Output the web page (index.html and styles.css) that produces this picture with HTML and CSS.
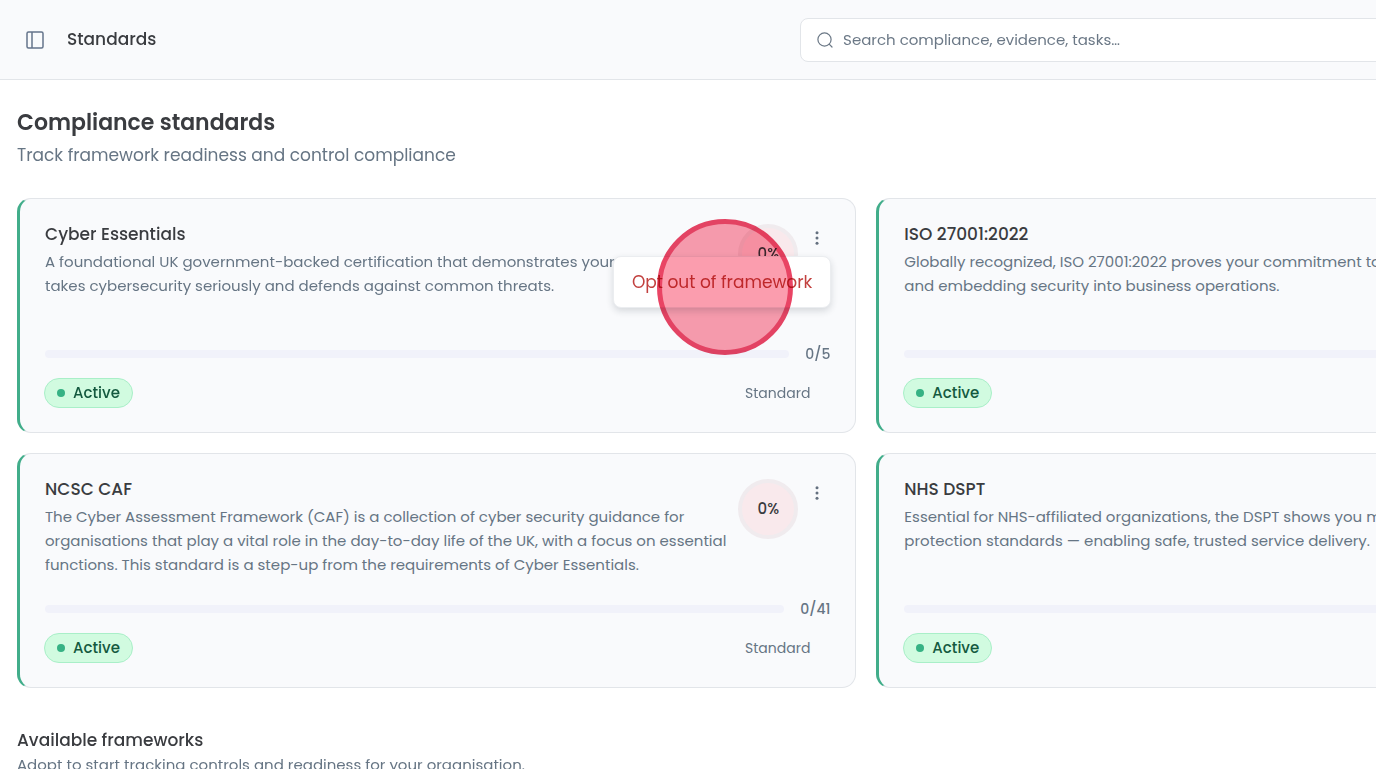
FILE: index.html
```
<!DOCTYPE html>
<html lang="en-GB">
<head>
<meta charset="utf-8">
<meta name="viewport" content="width=device-width, initial-scale=1">
<title>Standards</title>
<link rel="stylesheet" href="styles.css">
</head>
<body>
<header class="topbar">
  <div class="topbar-title">
    <button class="icon-button" type="button" aria-label="Toggle sidebar">
      <svg width="20" height="20" viewBox="0 0 20 20" fill="none" stroke="currentColor" stroke-width="1.5"><rect x="2" y="2" width="16" height="16" rx="1.5"/><path d="M7 2v16"/></svg>
    </button>
    <span class="page-name">Standards</span>
  </div>
  <label class="search">
    <svg width="18" height="18" viewBox="0 0 18 18" fill="none" stroke="currentColor" stroke-width="1.2" stroke-linecap="round"><circle cx="8.5" cy="8.5" r="6.6"/><path d="M13.2 13.2l2.8 2.8"/></svg>
    <input class="search-input" type="search" placeholder="Search compliance, evidence, tasks…" aria-label="Search">
  </label>
</header>
<main class="content">
  <h1 class="heading">Compliance standards</h1>
  <p class="subheading">Track framework readiness and control compliance</p>
  <section class="cards">
    <article class="card">
      <div class="card-head">
        <div class="card-text">
          <h2 class="card-title">Cyber Essentials</h2>
          <p class="card-desc">A foundational UK government-backed certification that demonstrates your organisation takes cybersecurity seriously and defends against common threats.</p>
        </div>
        <div class="ring">0%</div>
        <button class="kebab" type="button" aria-label="More options"><svg width="6" height="16" viewBox="0 0 6 16" fill="currentColor"><circle cx="3" cy="2.7" r="1.5"/><circle cx="3" cy="8" r="1.5"/><circle cx="3" cy="13.3" r="1.5"/></svg></button>
      </div>
      <div class="progress"><div class="track"></div><span>0/5</span></div>
      <div class="card-foot"><span class="badge"><i class="dot"></i>Active</span><span class="kind">Standard</span></div>
      <div class="menu" role="menu"><button class="menu-item" type="button" role="menuitem">Opt out of framework</button></div>
      <div class="click-marker"></div>
    </article>
    <article class="card">
      <div class="card-head">
        <div class="card-text">
          <h2 class="card-title">ISO 27001:2022</h2>
          <p class="card-desc">Globally recognized, ISO 27001:2022 proves your commitment to<br>and embedding security into business operations.</p>
        </div>
        <div class="ring">0%</div>
        <button class="kebab" type="button" aria-label="More options"><svg width="6" height="16" viewBox="0 0 6 16" fill="currentColor"><circle cx="3" cy="2.7" r="1.5"/><circle cx="3" cy="8" r="1.5"/><circle cx="3" cy="13.3" r="1.5"/></svg></button>
      </div>
      <div class="progress"><div class="track"></div></div>
      <div class="card-foot"><span class="badge"><i class="dot"></i>Active</span></div>
    </article>
    <article class="card">
      <div class="card-head">
        <div class="card-text">
          <h2 class="card-title">NCSC CAF</h2>
          <p class="card-desc">The Cyber Assessment Framework (CAF) is a collection of cyber security guidance for organisations that play a vital role in the day-to-day life of the UK, with a focus on essential functions. This standard is a step-up from the requirements of Cyber Essentials.</p>
        </div>
        <div class="ring">0%</div>
        <button class="kebab" type="button" aria-label="More options"><svg width="6" height="16" viewBox="0 0 6 16" fill="currentColor"><circle cx="3" cy="2.7" r="1.5"/><circle cx="3" cy="8" r="1.5"/><circle cx="3" cy="13.3" r="1.5"/></svg></button>
      </div>
      <div class="progress"><div class="track"></div><span>0/41</span></div>
      <div class="card-foot"><span class="badge"><i class="dot"></i>Active</span><span class="kind">Standard</span></div>
    </article>
    <article class="card">
      <div class="card-head">
        <div class="card-text">
          <h2 class="card-title">NHS DSPT</h2>
          <p class="card-desc">Essential for NHS-affiliated organizations, the DSPT shows you meet<br>protection standards — enabling safe, trusted service delivery.</p>
        </div>
        <div class="ring">0%</div>
        <button class="kebab" type="button" aria-label="More options"><svg width="6" height="16" viewBox="0 0 6 16" fill="currentColor"><circle cx="3" cy="2.7" r="1.5"/><circle cx="3" cy="8" r="1.5"/><circle cx="3" cy="13.3" r="1.5"/></svg></button>
      </div>
      <div class="progress"><div class="track"></div></div>
      <div class="card-foot"><span class="badge"><i class="dot"></i>Active</span></div>
    </article>
  </section>
  <h2 class="section-title">Available frameworks</h2>
  <p class="section-desc">Adopt to start tracking controls and readiness for your organisation.</p>
</main>
</body>
</html>
```
FILE: styles.css
```
* { box-sizing: border-box; }
html { overflow: hidden; }
body {
  margin: 0;
  overflow: hidden;
  background: #fff;
  color: #3a3c40;
  font-family: Poppins, Inter, "Open Sans", sans-serif;
  font-size: 15px;
  line-height: 24px;
}
h1, h2, p { margin: 0; }
button { font: inherit; border: 0; background: none; padding: 0; cursor: pointer; }

.topbar {
  display: grid;
  grid-template-columns: 58vw 50vw;
  align-items: center;
  padding: 18px 0 17px 2px;
  background: #f9fafc;
  border-bottom: 1px solid #e2e5e9;
}
.topbar-title { display: flex; align-items: center; gap: 22px; padding-left: 23px; }
.icon-button { display: flex; color: #64748b; }
.page-name { padding-bottom: 2px; font-size: 17px; font-weight: 500; }
.search {
  display: flex;
  align-items: center;
  gap: 9px;
  height: 44px;
  padding: 0 15px;
  border: 1px solid #e2e5e9;
  border-radius: 8px;
  background: #fff;
  color: #6b7886;
}
.search-input { flex: 1; border: 0; outline: 0; padding: 0; background: none; font: inherit; color: inherit; }
.search-input::placeholder { color: #6b7886; opacity: 1; }

.content { padding: 26px 0 0 17px; }
.heading { font-size: 22px; line-height: 34px; font-weight: 600; }
.subheading { margin-top: 2px; font-size: 17px; line-height: 26px; color: #667584; }

.cards {
  display: grid;
  grid-template-columns: repeat(2, 61vw);
  gap: 20px;
  margin-top: 30px;
}
.card {
  position: relative;
  padding: 23px 25px 24px 25px;
  border: 1px solid #e2e5e9;
  border-left: 3px solid #41ad8a;
  border-radius: 14px;
  background: #f9fafc;
}
.card-head { display: flex; align-items: flex-start; }
.card-text { flex: 1; padding-right: 8px; }
.card-title { font-size: 17px; line-height: 24px; font-weight: 500; }
.card-desc { margin-top: 4px; min-height: 72px; color: #667584; }
.ring {
  display: flex;
  align-items: center;
  justify-content: center;
  width: 60px;
  height: 60px;
  margin-top: 2px;
  border: 4px solid #f0ebee;
  border-radius: 50%;
  background: #f9e9ec;
  font-size: 15px;
  font-weight: 500;
}
.kebab {
  display: flex;
  align-items: center;
  justify-content: center;
  width: 26px;
  height: 32px;
  margin-left: 6px;
  color: #64707f;
}
.progress {
  display: flex;
  align-items: center;
  gap: 16px;
  height: 24px;
  margin-top: 20px;
  font-size: 14px;
  font-weight: 500;
  color: #667584;
}
.track { flex: 1; height: 8px; border-radius: 4px; background: #f1f2fa; }
.card-foot {
  display: flex;
  align-items: center;
  justify-content: space-between;
  margin-top: 12px;
  padding-right: 20px;
}
.badge {
  display: flex;
  align-items: center;
  gap: 8px;
  height: 30px;
  margin-left: -1px;
  padding: 0 12px;
  border: 1px solid #a9efc8;
  border-radius: 15px;
  background: #d1fbe0;
  color: #14593f;
  font-weight: 500;
}
.dot { width: 8px; height: 8px; border-radius: 50%; background: #36b284; }
.kind { font-size: 14px; color: #667584; }

.menu {
  position: absolute;
  top: 57px;
  right: 24px;
  padding: 12px 18px;
  border: 1px solid #ebedf0;
  border-radius: 8px;
  background: #fff;
  box-shadow: 0 3px 7px rgba(30, 41, 59, 0.16);
}
.menu-item { display: block; font-size: 17px; line-height: 26px; color: #c2413f; }
.click-marker {
  position: absolute;
  top: 20px;
  right: 62px;
  width: 136px;
  height: 136px;
  border: 5px solid #e94464;
  border-radius: 50%;
  background: #fb9dae;
  mix-blend-mode: multiply;
  pointer-events: none;
}

.section-title { margin-top: 39px; font-size: 17px; line-height: 26px; font-weight: 500; }
.section-desc { color: #667584; }
```
